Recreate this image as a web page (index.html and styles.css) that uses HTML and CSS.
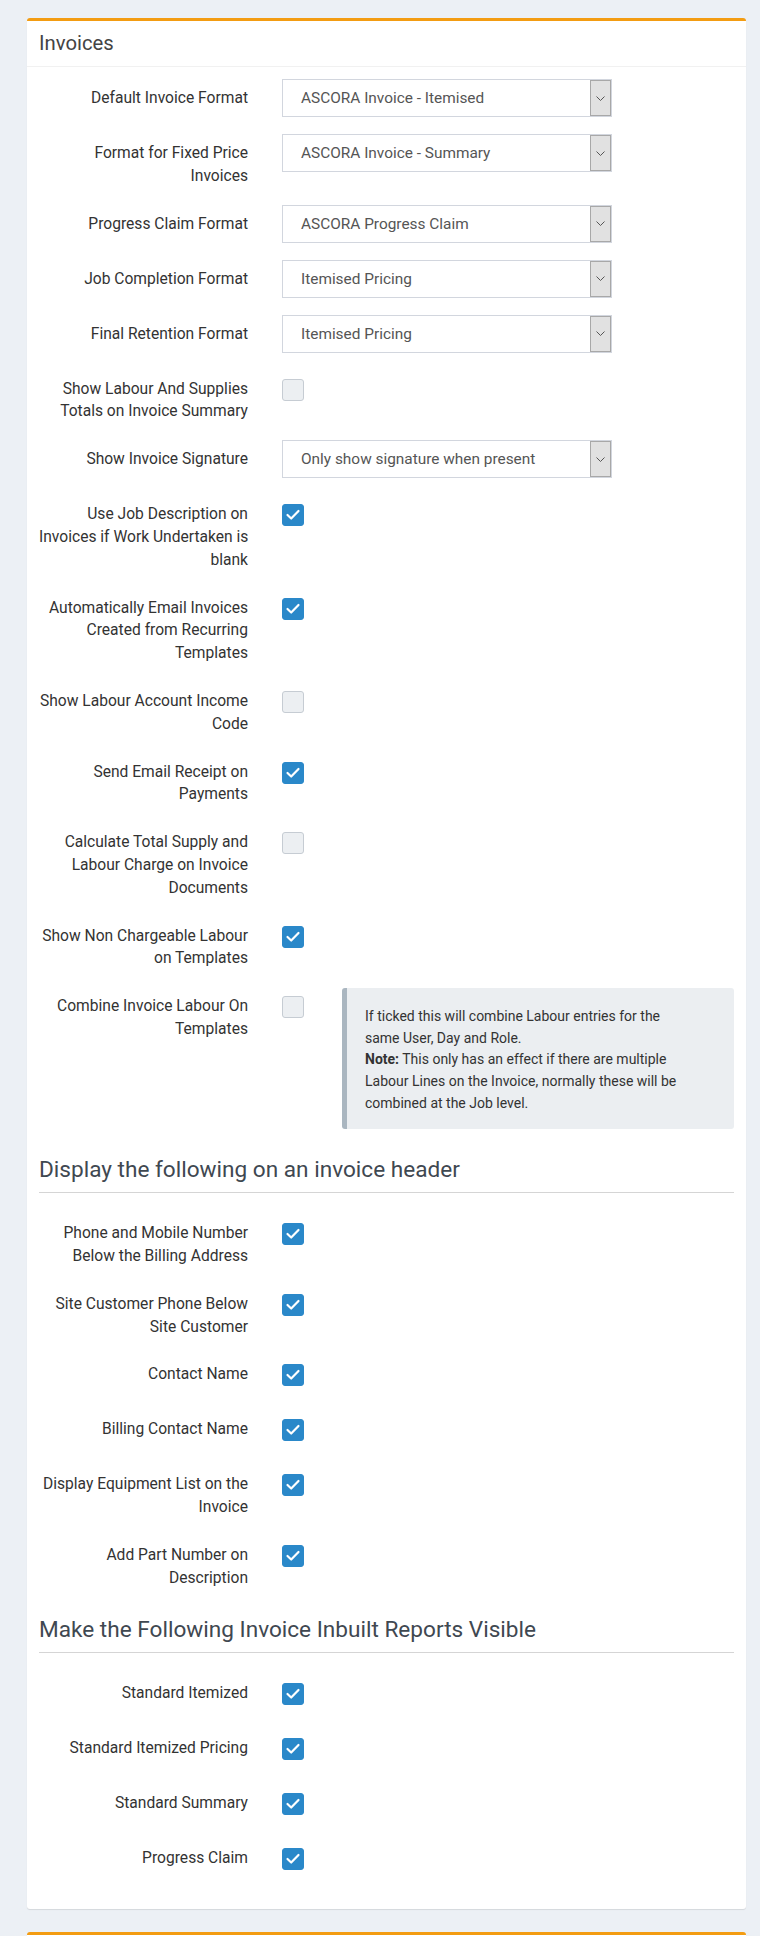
FILE: index.html
```html
<!DOCTYPE html>
<html lang="en">
<head>
<meta charset="utf-8">
<title>Invoices</title>
<link rel="stylesheet" href="styles.css">
</head>
<body>
<div class="page">
  <section class="box">
    <header class="box-header"><h3 class="box-title">Invoices</h3></header>
    <div class="box-body">

      <div class="row">
        <label class="lbl">Default Invoice Format</label>
        <div class="ctl"><div class="select"><span class="sel-text">ASCORA Invoice - Itemised</span><span class="sel-btn"><svg width="9" height="5" viewBox="0 0 9 5"><path d="M0.5 0.5 L4.5 4.5 L8.5 0.5" fill="none" stroke="#555" stroke-width="1"/></svg></span></div></div>
      </div>

      <div class="row">
        <label class="lbl">Format for Fixed Price<br>Invoices</label>
        <div class="ctl"><div class="select"><span class="sel-text">ASCORA Invoice - Summary</span><span class="sel-btn"><svg width="9" height="5" viewBox="0 0 9 5"><path d="M0.5 0.5 L4.5 4.5 L8.5 0.5" fill="none" stroke="#555" stroke-width="1"/></svg></span></div></div>
      </div>

      <div class="row">
        <label class="lbl">Progress Claim Format</label>
        <div class="ctl"><div class="select"><span class="sel-text">ASCORA Progress Claim</span><span class="sel-btn"><svg width="9" height="5" viewBox="0 0 9 5"><path d="M0.5 0.5 L4.5 4.5 L8.5 0.5" fill="none" stroke="#555" stroke-width="1"/></svg></span></div></div>
      </div>

      <div class="row">
        <label class="lbl">Job Completion Format</label>
        <div class="ctl"><div class="select"><span class="sel-text">Itemised Pricing</span><span class="sel-btn"><svg width="9" height="5" viewBox="0 0 9 5"><path d="M0.5 0.5 L4.5 4.5 L8.5 0.5" fill="none" stroke="#555" stroke-width="1"/></svg></span></div></div>
      </div>

      <div class="row">
        <label class="lbl">Final Retention Format</label>
        <div class="ctl"><div class="select"><span class="sel-text">Itemised Pricing</span><span class="sel-btn"><svg width="9" height="5" viewBox="0 0 9 5"><path d="M0.5 0.5 L4.5 4.5 L8.5 0.5" fill="none" stroke="#555" stroke-width="1"/></svg></span></div></div>
      </div>

      <div class="row">
        <label class="lbl">Show Labour And Supplies<br>Totals on Invoice Summary</label>
        <div class="ctl"><span class="cb"></span></div>
      </div>

      <div class="row">
        <label class="lbl">Show Invoice Signature</label>
        <div class="ctl"><div class="select"><span class="sel-text">Only show signature when present</span><span class="sel-btn"><svg width="9" height="5" viewBox="0 0 9 5"><path d="M0.5 0.5 L4.5 4.5 L8.5 0.5" fill="none" stroke="#555" stroke-width="1"/></svg></span></div></div>
      </div>

      <div class="row">
        <label class="lbl">Use Job Description on<br>Invoices if Work Undertaken is<br>blank</label>
        <div class="ctl"><span class="cb on"><svg width="22" height="22" viewBox="0 0 22 22"><path d="M5.5 11 L9.2 14.5 L16.5 7" fill="none" stroke="#fff" stroke-width="2.2" stroke-linecap="round" stroke-linejoin="round"/></svg></span></div>
      </div>

      <div class="row">
        <label class="lbl">Automatically Email Invoices<br>Created from Recurring<br>Templates</label>
        <div class="ctl"><span class="cb on"><svg width="22" height="22" viewBox="0 0 22 22"><path d="M5.5 11 L9.2 14.5 L16.5 7" fill="none" stroke="#fff" stroke-width="2.2" stroke-linecap="round" stroke-linejoin="round"/></svg></span></div>
      </div>

      <div class="row">
        <label class="lbl">Show Labour Account Income<br>Code</label>
        <div class="ctl"><span class="cb"></span></div>
      </div>

      <div class="row">
        <label class="lbl">Send Email Receipt on<br>Payments</label>
        <div class="ctl"><span class="cb on"><svg width="22" height="22" viewBox="0 0 22 22"><path d="M5.5 11 L9.2 14.5 L16.5 7" fill="none" stroke="#fff" stroke-width="2.2" stroke-linecap="round" stroke-linejoin="round"/></svg></span></div>
      </div>

      <div class="row">
        <label class="lbl">Calculate Total Supply and<br>Labour Charge on Invoice<br>Documents</label>
        <div class="ctl"><span class="cb"></span></div>
      </div>

      <div class="row">
        <label class="lbl">Show Non Chargeable Labour<br>on Templates</label>
        <div class="ctl"><span class="cb on"><svg width="22" height="22" viewBox="0 0 22 22"><path d="M5.5 11 L9.2 14.5 L16.5 7" fill="none" stroke="#fff" stroke-width="2.2" stroke-linecap="round" stroke-linejoin="round"/></svg></span></div>
      </div>

      <div class="row">
        <label class="lbl">Combine Invoice Labour On<br>Templates</label>
        <div class="ctl ctl-split">
          <span class="cb"></span>
          <div class="callout">If ticked this will combine Labour entries for the<br>same User, Day and Role.<br><b>Note:</b> This only has an effect if there are multiple<br>Labour Lines on the Invoice, normally these will be<br>combined at the Job level.</div>
        </div>
      </div>

      <h4 class="legend">Display the following on an invoice header</h4>

      <div class="row">
        <label class="lbl">Phone and Mobile Number<br>Below the Billing Address</label>
        <div class="ctl"><span class="cb on"><svg width="22" height="22" viewBox="0 0 22 22"><path d="M5.5 11 L9.2 14.5 L16.5 7" fill="none" stroke="#fff" stroke-width="2.2" stroke-linecap="round" stroke-linejoin="round"/></svg></span></div>
      </div>

      <div class="row">
        <label class="lbl">Site Customer Phone Below<br>Site Customer</label>
        <div class="ctl"><span class="cb on"><svg width="22" height="22" viewBox="0 0 22 22"><path d="M5.5 11 L9.2 14.5 L16.5 7" fill="none" stroke="#fff" stroke-width="2.2" stroke-linecap="round" stroke-linejoin="round"/></svg></span></div>
      </div>

      <div class="row">
        <label class="lbl">Contact Name</label>
        <div class="ctl"><span class="cb on"><svg width="22" height="22" viewBox="0 0 22 22"><path d="M5.5 11 L9.2 14.5 L16.5 7" fill="none" stroke="#fff" stroke-width="2.2" stroke-linecap="round" stroke-linejoin="round"/></svg></span></div>
      </div>

      <div class="row">
        <label class="lbl">Billing Contact Name</label>
        <div class="ctl"><span class="cb on"><svg width="22" height="22" viewBox="0 0 22 22"><path d="M5.5 11 L9.2 14.5 L16.5 7" fill="none" stroke="#fff" stroke-width="2.2" stroke-linecap="round" stroke-linejoin="round"/></svg></span></div>
      </div>

      <div class="row">
        <label class="lbl">Display Equipment List on the<br>Invoice</label>
        <div class="ctl"><span class="cb on"><svg width="22" height="22" viewBox="0 0 22 22"><path d="M5.5 11 L9.2 14.5 L16.5 7" fill="none" stroke="#fff" stroke-width="2.2" stroke-linecap="round" stroke-linejoin="round"/></svg></span></div>
      </div>

      <div class="row">
        <label class="lbl">Add Part Number on<br>Description</label>
        <div class="ctl"><span class="cb on"><svg width="22" height="22" viewBox="0 0 22 22"><path d="M5.5 11 L9.2 14.5 L16.5 7" fill="none" stroke="#fff" stroke-width="2.2" stroke-linecap="round" stroke-linejoin="round"/></svg></span></div>
      </div>

      <h4 class="legend">Make the Following Invoice Inbuilt Reports Visible</h4>

      <div class="row">
        <label class="lbl">Standard Itemized</label>
        <div class="ctl"><span class="cb on"><svg width="22" height="22" viewBox="0 0 22 22"><path d="M5.5 11 L9.2 14.5 L16.5 7" fill="none" stroke="#fff" stroke-width="2.2" stroke-linecap="round" stroke-linejoin="round"/></svg></span></div>
      </div>

      <div class="row">
        <label class="lbl">Standard Itemized Pricing</label>
        <div class="ctl"><span class="cb on"><svg width="22" height="22" viewBox="0 0 22 22"><path d="M5.5 11 L9.2 14.5 L16.5 7" fill="none" stroke="#fff" stroke-width="2.2" stroke-linecap="round" stroke-linejoin="round"/></svg></span></div>
      </div>

      <div class="row">
        <label class="lbl">Standard Summary</label>
        <div class="ctl"><span class="cb on"><svg width="22" height="22" viewBox="0 0 22 22"><path d="M5.5 11 L9.2 14.5 L16.5 7" fill="none" stroke="#fff" stroke-width="2.2" stroke-linecap="round" stroke-linejoin="round"/></svg></span></div>
      </div>

      <div class="row">
        <label class="lbl">Progress Claim</label>
        <div class="ctl"><span class="cb on"><svg width="22" height="22" viewBox="0 0 22 22"><path d="M5.5 11 L9.2 14.5 L16.5 7" fill="none" stroke="#fff" stroke-width="2.2" stroke-linecap="round" stroke-linejoin="round"/></svg></span></div>
      </div>

    </div>
  </section>
  <section class="box box-next"></section>
</div>
</body>
</html>
```
FILE: styles.css
```css
* { box-sizing: border-box; }
html, body { margin: 0; padding: 0; }
body {
  background: #ecf0f5;
  font-family: Roboto, "Liberation Sans", Arial, sans-serif;
  font-size: 15.6px;
  color: #333;
  height: 1936px;
  overflow: hidden;
}
.page {
  padding: 18px 14px 0 27px;
}
.box {
  width: 719px;
  background: #fff;
  border-top: 3px solid #f39c12;
  border-radius: 3px;
  box-shadow: 0 1px 1px rgba(0, 0, 0, 0.1);
  margin-bottom: 23px;
}
.box-next { height: 60px; }
.box-header {
  height: 46px;
  display: flex;
  align-items: center;
  padding: 0 12px;
  border-bottom: 1px solid #f1f1f1;
}
.box-title {
  margin: 0;
  font-size: 20.3px;
  font-weight: 400;
  color: #444;
  line-height: 1;
}
.box-body {
  padding: 12px 12px 15px;
}
.row {
  display: grid;
  grid-template-columns: 209px 1fr;
  column-gap: 34px;
  min-height: 38px;
  margin-bottom: 17px;
}
.lbl {
  text-align: right;
  padding-top: 8px;
  line-height: 22.8px;
  color: #333;
  white-space: nowrap;
}
.ctl { min-width: 0; }
.select {
  width: 330px;
  height: 38px;
  border: 1px solid #d2d6de;
  display: flex;
  align-items: center;
  justify-content: space-between;
  background: #fff;
  font-size: 15.4px;
}
.sel-text {
  padding-left: 18px;
  color: #555;
  white-space: nowrap;
}
.sel-btn {
  width: 21px;
  height: 36px;
  background: #e1e1e1;
  border: 1px solid #a8a8a8;
  display: flex;
  align-items: center;
  justify-content: center;
}
.cb {
  display: block;
  width: 22px;
  height: 22px;
  margin-top: 9px;
  border-radius: 3px;
  background: #eceff2;
  border: 1px solid #c6ccd3;
}
.cb.on {
  background: #2a88c9;
  border-color: #2a88c9;
}
.cb svg { display: block; margin: -1px; }
.ctl-split {
  display: flex;
  gap: 38px;
  align-items: flex-start;
}
.callout {
  margin-top: 1px;
  width: 392px;
  background: #ebeef1;
  border-left: 5px solid #aab6c0;
  border-radius: 3px;
  padding: 18px 12px 15px 18px;
  font-size: 14px;
  line-height: 21.6px;
  color: #333;
  white-space: nowrap;
}
.callout b { font-weight: 700; }
.legend {
  margin: 26px 0 21px;
  font-size: 22.6px;
  font-weight: 400;
  line-height: 30px;
  padding-bottom: 7px;
  border-bottom: 1px solid #d5d5d5;
  color: #3f4851;
}
```
